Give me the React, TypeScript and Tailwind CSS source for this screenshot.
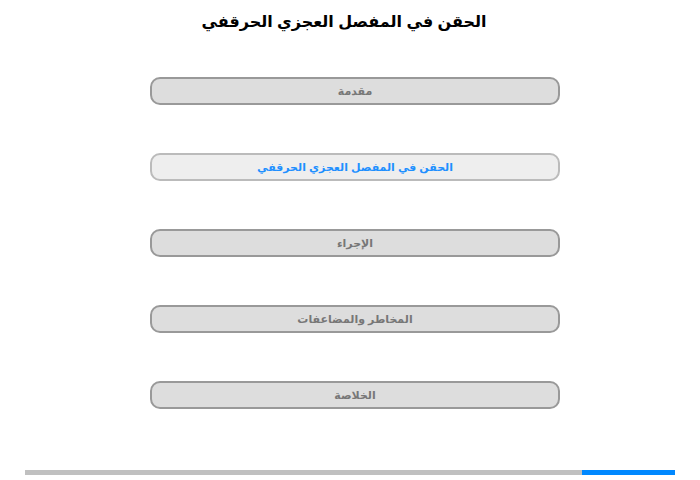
import React from "react";

const items = [
  { label: "مقدمة", active: false },
  { label: "الحقن في المفصل العجزي الحرقفي", active: true },
  { label: "الإجراء", active: false },
  { label: "المخاطر والمضاعفات", active: false },
  { label: "الخلاصة", active: false },
];

export default function App() {
  return (
    <div
      dir="rtl"
      className="w-[700px] h-[480px] bg-white relative overflow-hidden"
      style={{ fontFamily: '"Liberation Sans", Arial, "DejaVu Sans", sans-serif' }}
    >
      <h1 className="pt-[10px] h-[40px] text-center text-[16px] font-bold text-black leading-[24px] pr-[12px]">
        الحقن في المفصل العجزي الحرقفي
      </h1>
      <div className="mt-[37px] flex flex-col gap-[48px]">
        {items.map((it) => (
          <div
            key={it.label}
            className={
              "ml-[150px] mr-[140px] w-[410px] h-[28px] rounded-[10px] border-2 flex items-center justify-center text-[11px] font-bold " +
              (it.active
                ? "bg-[#eeeeee] border-[#bbbbbb] text-[#1e90ff]"
                : "bg-[#dddddd] border-[#999999] text-[#777777]")
            }
          >
            {it.label}
          </div>
        ))}
      </div>
      <div dir="ltr" className="absolute left-[25px] top-[470px] w-[650px] h-[5px] bg-[#c0c0c0] flex">
        <div className="ml-auto w-[93px] h-full bg-[#0088ff]" />
      </div>
    </div>
  );
}
